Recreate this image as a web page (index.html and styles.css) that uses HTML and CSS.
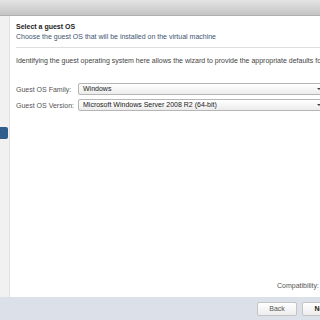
FILE: index.html
```html
<!DOCTYPE html>
<html lang="en">
<head>
    <meta charset="UTF-8">
    <title>New Virtual Machine</title>
    <link rel="stylesheet" href="styles.css">
</head>
<body>
    <div class="titlebar"></div>

    <div class="main">
        <div class="sidebar">
            <div class="nav-item active"></div>
        </div>

        <div class="content">
            <div class="page-head">
                <div class="page-title">Select a guest OS</div>
                <div class="page-desc">Choose the guest OS that will be installed on the virtual machine</div>
            </div>

            <p class="intro">Identifying the guest operating system here allows the wizard to provide the appropriate defaults for the operating system installation.</p>

            <div class="form-row">
                <label>Guest OS Family:</label>
                <div class="select">Windows<span class="arrow"></span></div>
            </div>
            <div class="form-row">
                <label>Guest OS Version:</label>
                <div class="select">Microsoft Windows Server 2008 R2 (64-bit)<span class="arrow"></span></div>
            </div>

            <div class="compat">Compatibility: ESXi 6.0 and later (VM version 11)</div>
        </div>
    </div>

    <div class="footer">
        <button class="btn">Back</button>
        <button class="btn btn-next">Next</button>
    </div>
</body>
</html>
```

FILE: styles.css
```css
body {
    margin: 0;
    width: 320px;
    height: 320px;
    overflow: hidden;
    font-family: "Liberation Sans", Arial, sans-serif;
    font-size: 7px;
    color: #333;
    display: flex;
    flex-direction: column;
    background: #fff;
}
.titlebar {
    height: 16px;
    flex: none;
    background: linear-gradient(#e4e4e4, #c4c4c4);
    border-bottom: 1px solid #b0b0b0;
    box-sizing: border-box;
}
.main {
    flex: 1;
    display: flex;
    min-height: 0;
}
.sidebar {
    width: 10px;
    flex: none;
    background: #f1f1f1;
    border-right: 1px solid #e2e2e2;
    box-sizing: border-box;
    padding-top: 111px;
}
.nav-item {
    height: 12px;
    width: 8px;
}
.nav-item.active {
    background: #2f5d8c;
    border-radius: 0 2px 2px 0;
}
.content {
    flex: 1;
    display: flex;
    flex-direction: column;
    padding: 6px 0 8px 6px;
    white-space: nowrap;
    overflow: hidden;
}
.page-head {
    border-bottom: 1px solid #ddd;
    padding-bottom: 5px;
    margin-bottom: 8px;
}
.page-title {
    font-weight: bold;
    color: #222;
    line-height: 10px;
}
.page-desc {
    color: #3b5570;
    line-height: 10px;
}
.intro {
    margin: 0 0 17px;
    color: #444;
    line-height: 10px;
}
.form-row {
    display: flex;
    align-items: center;
    margin-bottom: 4px;
}
.form-row label {
    width: 62px;
    flex: none;
    color: #555;
}
.select {
    position: relative;
    width: 250px;
    flex: none;
    height: 12px;
    line-height: 10px;
    box-sizing: border-box;
    border: 1px solid #b5b5b5;
    border-radius: 2px;
    padding-left: 4px;
    background: linear-gradient(#fff, #ececec);
    color: #222;
}
.arrow {
    position: absolute;
    left: 238px;
    top: 4px;
    border-left: 2px solid transparent;
    border-right: 2px solid transparent;
    border-top: 2px solid #444;
}
.compat {
    margin-top: auto;
    padding-left: 261px;
    color: #555;
}
.footer {
    height: 23px;
    flex: none;
    background: #dce1e9;
    display: flex;
    align-items: center;
    padding-left: 257px;
    gap: 5px;
}
.btn {
    flex: none;
    width: 40px;
    height: 14px;
    padding: 0;
    font-family: inherit;
    font-size: 7px;
    color: #555;
    background: linear-gradient(#fff, #ededed);
    border: 1px solid #c4c4c4;
    border-radius: 2px;
}
.btn-next {
    font-weight: bold;
    color: #222;
}
```
